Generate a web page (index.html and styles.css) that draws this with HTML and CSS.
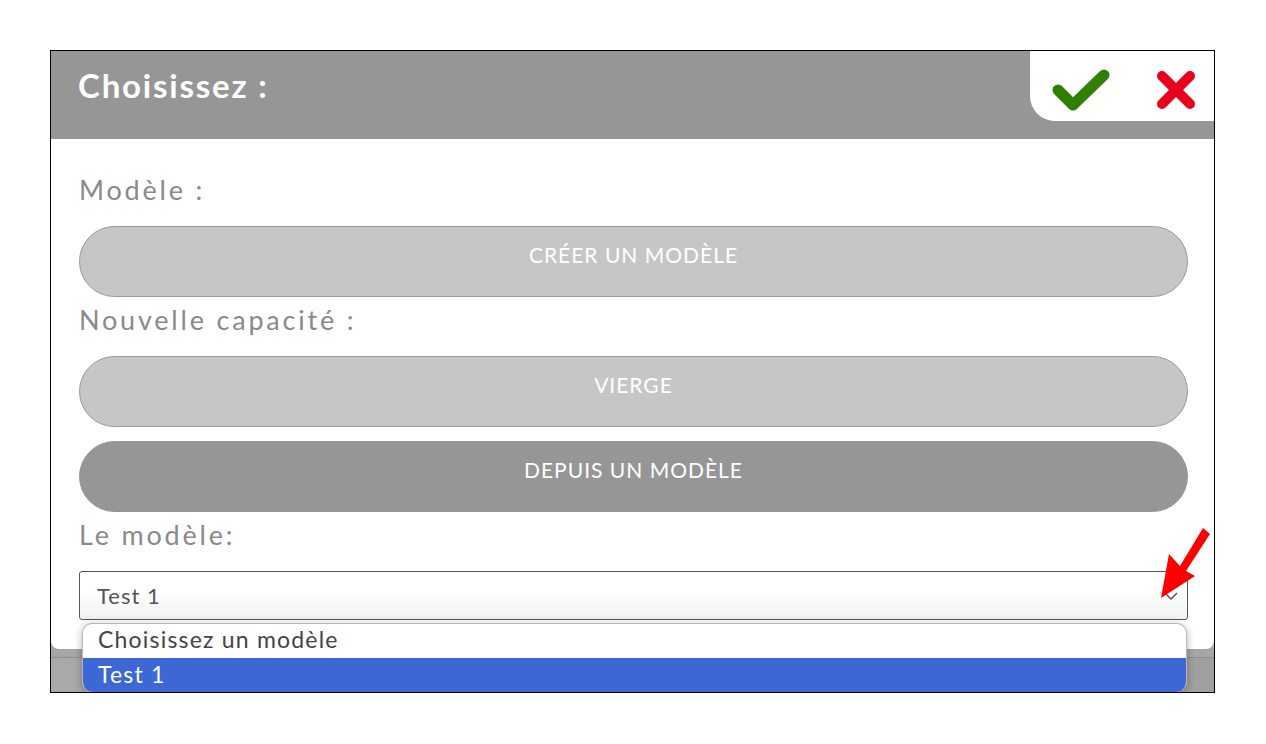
FILE: index.html
```html
<!DOCTYPE html>
<html lang="fr">
<head>
  <meta charset="UTF-8" />
  <meta name="viewport" content="width=device-width, initial-scale=1.0"/>
  <title>Choisissez</title>
  <link rel="stylesheet" href="styles.css">
</head>
<body>
  <div class="dialog">
    <div class="dialog-header">
      <h1>Choisissez :</h1>
      <div class="actions">
        <!-- valider -->
        <svg class="icon-ok" width="60" height="44" viewBox="0 0 60 44">
          <polyline points="6,22 21,37 52,7" fill="none" stroke="#2f7f00" stroke-width="11" stroke-linecap="round" stroke-linejoin="round"/>
        </svg>
        <!-- annuler -->
        <svg class="icon-cancel" width="40" height="40" viewBox="0 0 40 40">
          <path d="M6 6 L34 34 M34 6 L6 34" fill="none" stroke="#e8001c" stroke-width="10" stroke-linecap="round"/>
        </svg>
      </div>
    </div>

    <div class="dialog-body">
      <label class="field-label">Modèle :</label>
      <button class="pill">CRÉER UN MODÈLE</button>

      <label class="field-label">Nouvelle capacité :</label>
      <button class="pill">VIERGE</button>
      <button class="pill pill-active">DEPUIS UN MODÈLE</button>

      <label class="field-label">Le modèle:</label>
      <div class="select">
        <span>Test 1</span>
        <svg class="chevron" width="16" height="10" viewBox="0 0 16 10">
          <polyline points="2,2 8,8 14,2" fill="none" stroke="#555" stroke-width="1.5"/>
        </svg>
      </div>
    </div>

    <div class="dialog-footer"></div>

    <!-- liste ouverte du select -->
    <ul class="options">
      <li>Choisissez un modèle</li>
      <li class="selected">Test 1</li>
    </ul>

    <!-- flèche d'annotation -->
    <svg class="annot-arrow" width="66" height="86" viewBox="0 0 66 86">
      <polygon points="11,78 19,34 30,46 53,8 60,14 36,51 45,56" fill="#ff0000"/>
    </svg>
  </div>
</body>
</html>
```

FILE: styles.css
```css
body {
  margin: 0;
  padding: 50px 0 0 50px;
  background-color: #fff;
  font-family: 'Lato', 'Noto Sans', sans-serif;
}

.dialog {
  position: relative;
  width: 1163px;
  height: 641px;
  border: 1px solid #000;
  background-color: #a6a6a6;
  display: flex;
  flex-direction: column;
}

.dialog-header {
  height: 88px;
  background-color: #969696;
  display: flex;
  justify-content: space-between;
  align-items: flex-start;
}

.dialog-header h1 {
  margin: 0;
  padding: 14px 0 0 27px;
  color: #fff;
  font-size: 33px;
  line-height: 40px;
  font-weight: bold;
  letter-spacing: 1.8px;
}

.actions {
  width: 184px;
  height: 62px;
  padding-top: 8px;
  background-color: #fff;
  border-bottom-left-radius: 25px;
  display: flex;
  align-items: center;
}

.icon-ok {
  margin-left: 22px;
}

.icon-cancel {
  margin-left: 44px;
}

.dialog-body {
  height: 482px;
  padding: 28px 26px 0 28px;
  background-color: #fff;
  border-radius: 0 0 8px 8px;
  display: flex;
  flex-direction: column;
}

.field-label {
  display: block;
  height: 48px;
  padding-bottom: 11px;
  line-height: 46px;
  font-size: 27px;
  letter-spacing: 2.8px;
  color: #8a8a8a;
}

.pill {
  height: 71px;
  width: 100%;
  padding: 0 0 14px;
  border: 1px solid #999;
  border-radius: 36px;
  background-color: #c6c6c6;
  color: #fff;
  font-family: inherit;
  font-size: 21px;
  letter-spacing: 1px;
  cursor: pointer;
}

.pill-active {
  margin-top: 14px;
  border-color: #969696;
  background-color: #969696;
}

.select {
  height: 47px;
  border: 1px solid #555;
  border-radius: 3px;
  background: linear-gradient(#fff 40%, #f1f1f1);
  display: flex;
  align-items: center;
  justify-content: space-between;
  padding: 0 8px 0 17px;
  color: #555;
  font-size: 22px;
  letter-spacing: 1px;
}

.dialog-footer {
  flex: 1;
  margin-top: 8px;
  border-top: 1px solid #8e8e8e;
  background: linear-gradient(90deg, #a9a9a9, #a0a0a0);
}

.options {
  position: absolute;
  left: 31px;
  top: 572px;
  width: 1103px;
  margin: 0;
  padding: 0;
  list-style: none;
  background-color: #fff;
  border: 1px solid #b8b8b8;
  border-bottom: none;
  border-radius: 10px;
  overflow: hidden;
  box-shadow: 0 2px 8px rgba(0, 0, 0, 0.3);
  font-size: 23px;
  letter-spacing: 1.2px;
  color: #444;
}

.options li {
  height: 34px;
  line-height: 30px;
  padding-left: 15px;
}

.options li.selected {
  line-height: 32px;
  background-color: #3d67d4;
  color: #fff;
}

.annot-arrow {
  position: absolute;
  left: 1099px;
  top: 469px;
}
```
